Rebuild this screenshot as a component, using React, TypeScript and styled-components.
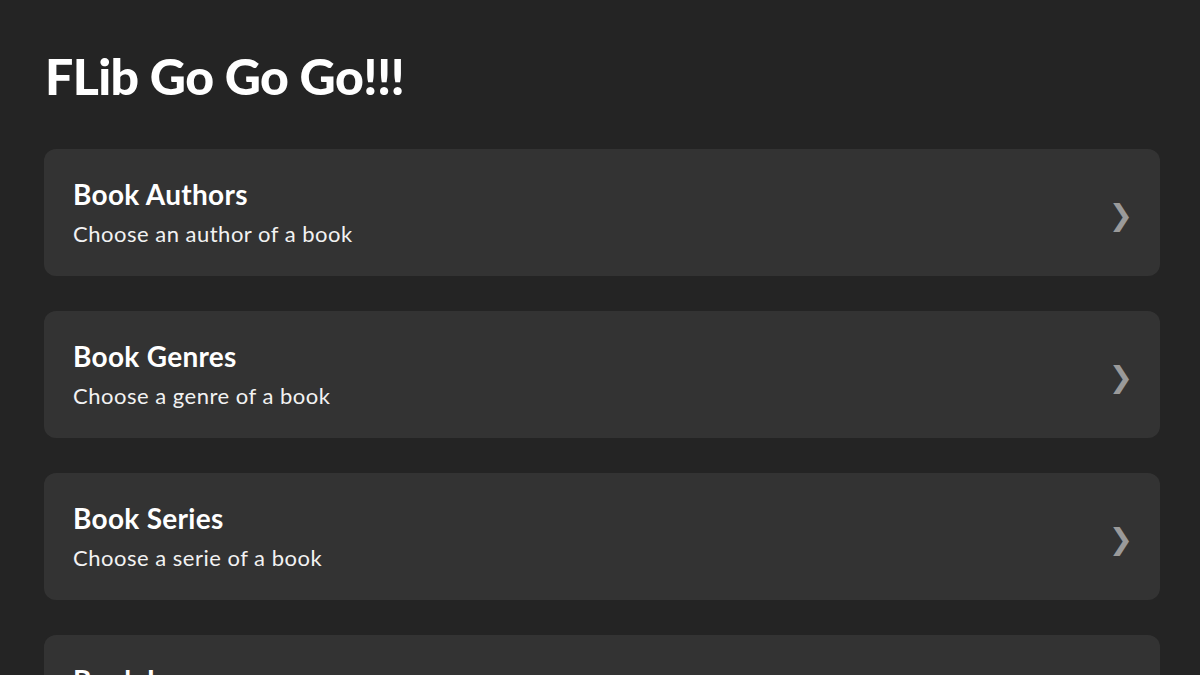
import React from "react";
import styled, { createGlobalStyle } from "styled-components";

const Global = createGlobalStyle`
  html, body { margin: 0; padding: 0; background: #242424; }
  body { font-family: Lato, "Open Sans", sans-serif; color: #ffffff; }
`;

const Page = styled.main`
  padding: 46px 40px 0 44px;
  display: flex;
  flex-direction: column;
  height: 675px;
  box-sizing: border-box;
  overflow: hidden;
`;

const Title = styled.h1`
  margin: 0 0 43px 1px;
  font-size: 50px;
  font-weight: 900;
  line-height: 60px;
  letter-spacing: -0.6px;
`;

const List = styled.nav`
  display: flex;
  flex-direction: column;
  gap: 35px;
`;

const Card = styled.a`
  display: flex;
  align-items: center;
  justify-content: space-between;
  height: 127px;
  box-sizing: border-box;
  padding: 0 27px 0 29px;
  background: #333333;
  border-radius: 12px;
  color: #ffffff;
  text-decoration: none;
  flex-shrink: 0;
`;

const Texts = styled.div`
  display: flex;
  flex-direction: column;
  gap: 9px;
`;

const CardTitle = styled.div`
  font-size: 28px;
  font-weight: 700;
  line-height: 34px;
  letter-spacing: 0.3px;
`;

const CardSub = styled.div`
  font-size: 22px;
  font-weight: 400;
  line-height: 28px;
  letter-spacing: 0.5px;
  color: #f2f2f2;
`;

const Chevron = styled.span`
  color: #9a9a9a;
  font-size: 29px;
  padding-top: 4px;
  padding-left: 2px;
  font-family: "DejaVu Sans", sans-serif;
`;

const items = [
  { t: "Book Authors", s: "Choose an author of a book" },
  { t: "Book Genres", s: "Choose a genre of a book" },
  { t: "Book Series", s: "Choose a serie of a book" },
  { t: "Book Languages", s: "Choose a language of a book" },
];

export default function App() {
  return (
    <>
      <Global />
      <Page>
        <Title>FLib Go Go Go!!!</Title>
        <List>
          {items.map((i) => (
            <Card key={i.t} href="#">
              <Texts>
                <CardTitle>{i.t}</CardTitle>
                <CardSub>{i.s}</CardSub>
              </Texts>
              <Chevron>❯</Chevron>
            </Card>
          ))}
        </List>
      </Page>
    </>
  );
}
